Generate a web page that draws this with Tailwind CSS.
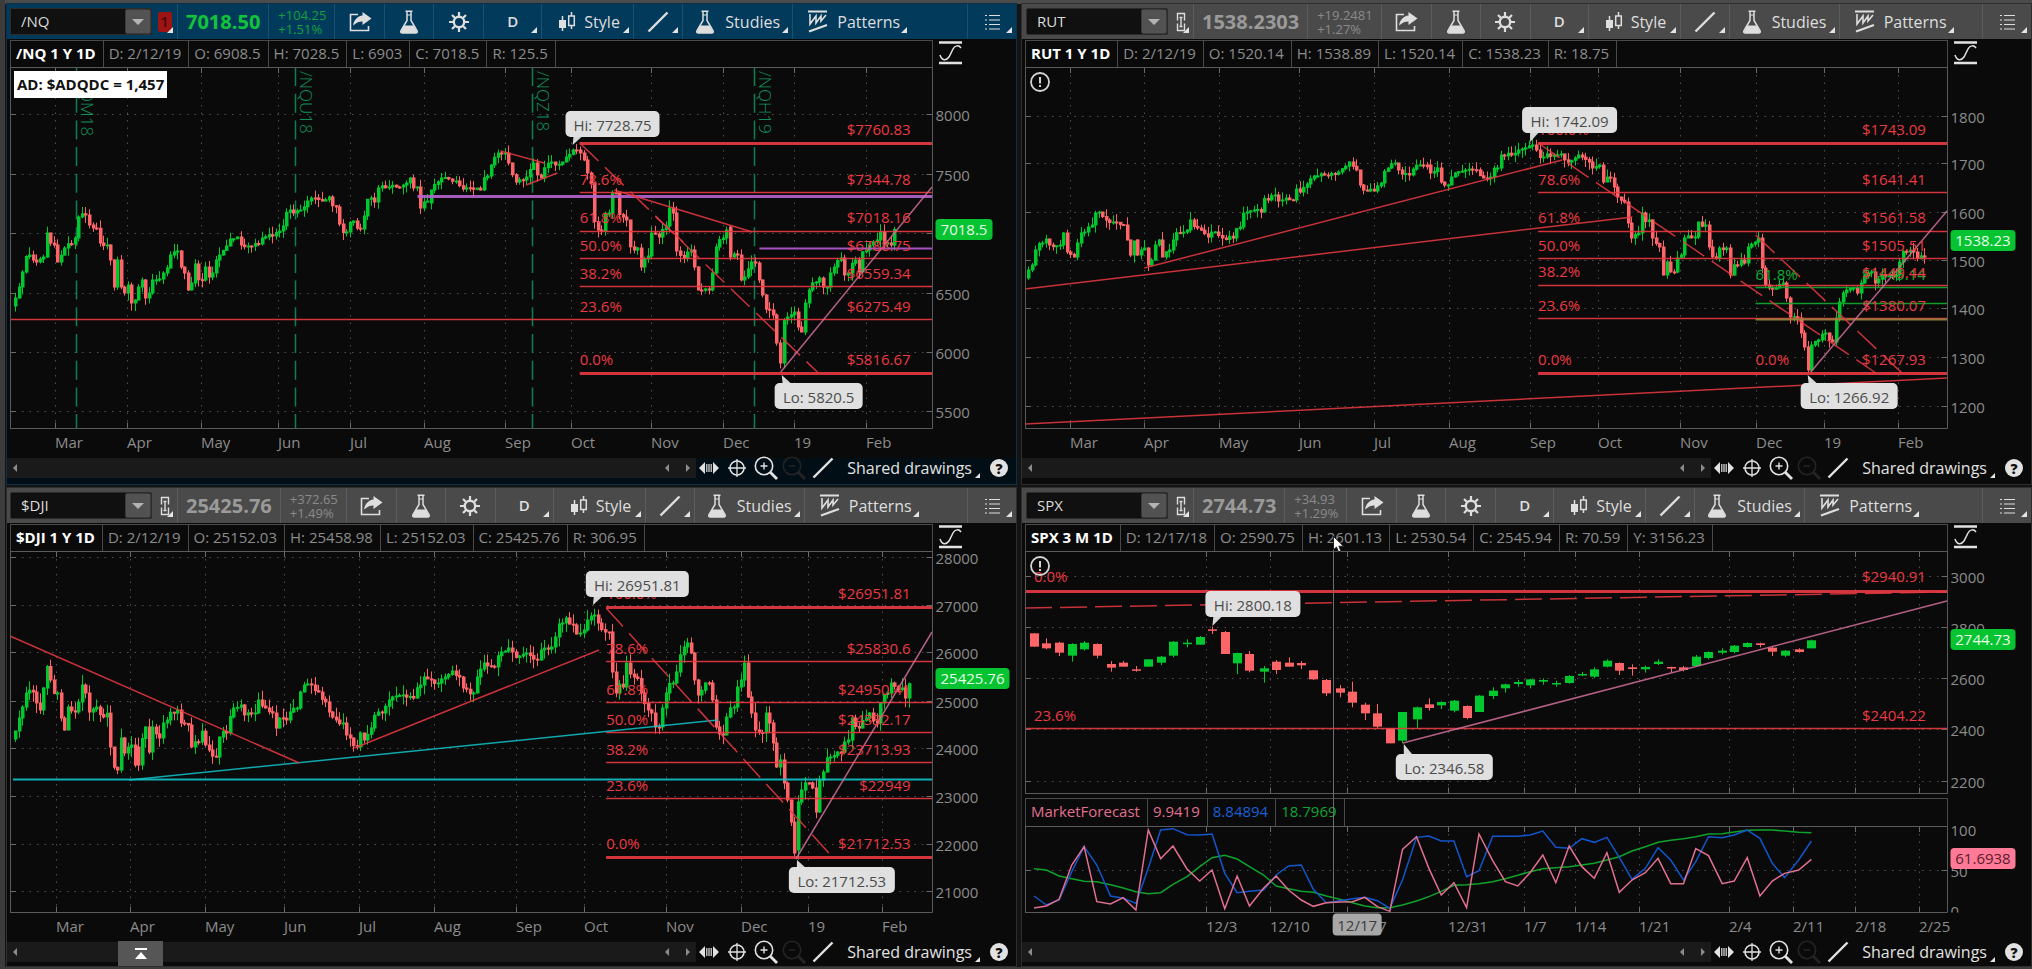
<!DOCTYPE html>
<html lang="en">
<head>
<meta charset="utf-8">
<title>Charts</title>
<script src="https://cdn.jsdelivr.net/npm/@tailwindcss/browser@4"></script>
</head>
<body class="bg-[#4b4b4b] font-['Open_Sans',sans-serif] text-[15px] text-[#8c8c8c] overflow-x-hidden">

<svg class="hidden">
  <symbol id="i-share" viewBox="0 0 24 22"><path d="M10 3.500H2.500v16h18V15" fill="none" stroke="currentColor" stroke-width="1.600"/><path d="M14.500 1l9 6.500-9 6.500v-3.600c-4 0-6.500 1.600-9.500 4.100.8-5.500 4.500-9.500 9.500-10z" fill="currentColor"/></symbol>
  <symbol id="i-flask" viewBox="0 0 20 24"><path d="M6.500 1.200h7M8 2v8.500L2 20.500c-.8 1.500 0 2.500 1.300 2.500h13.400c1.300 0 2.100-1 1.300-2.500L12 10.500V2" fill="none" stroke="currentColor" stroke-width="1.500"/><path d="M5 15.500h10l3 6q0 1.500-1.500 1.500h-13Q2 23 2 21.500z" fill="currentColor"/><path d="M8 5h4" stroke="currentColor"/></symbol>
  <symbol id="i-gear" viewBox="0 0 20 20"><circle cx="10" cy="10" r="5.200" fill="none" stroke="currentColor" stroke-width="2.400"/><path d="M10 0v5M10 15v5M0 10h5M15 10h5M3 3l3.300 3.300M13.700 13.700L17 17M17 3l-3.300 3.300M6.300 13.700L3 17" stroke="currentColor" stroke-width="2.200"/></symbol>
  <symbol id="i-candles" viewBox="0 0 18 20"><path d="M4.500 4v15M13.500 0v4M13.500 13v4" stroke="currentColor" stroke-width="1.500"/><path d="M1 8h7v8H1z" fill="currentColor"/><path d="M10.700 4h5.600v9.500h-5.600z" fill="none" stroke="currentColor" stroke-width="1.500"/></symbol>
  <symbol id="i-line" viewBox="0 0 22 22"><path d="M1.500 20.500L20.500 1.500" stroke="currentColor" stroke-width="2.400"/></symbol>
  <symbol id="i-pattern" viewBox="0 0 22 23"><path d="M1 1.500h19" stroke="currentColor" stroke-width="2"/><path d="M2 21.500L20 15" stroke="currentColor" stroke-width="2.200"/><path d="M3 4v10l6-8v7l5-7v5l5-6" fill="none" stroke="currentColor" stroke-width="1.600"/></symbol>
  <symbol id="i-list" viewBox="0 0 15 16"><path d="M0 1.500h2M0 6h2M0 10.500h2M0 15h2M4 1.500h11M4 6h11M4 10.500h11M4 15h11" stroke="currentColor" stroke-width="1.200"/></symbol>
  <symbol id="i-link" viewBox="0 0 10 20"><path d="M1.500 8.500V1.500h7v7M1.500 11.500v7h7v-7" fill="none" stroke="currentColor" stroke-width="1.400"/><path d="M3.500 5.500h3M5 5.500v9M3.500 14.500h3" stroke="currentColor" stroke-width="1.400"/></symbol>
  <symbol id="i-wave" viewBox="0 0 23 24"><path d="M0 1.500h23M0 22h23" stroke="currentColor" stroke-width="2.600"/><path d="M1 14c2 6 6 6 9 2l4-8c2-4 6-4 8-1" fill="none" stroke="currentColor" stroke-width="1.500"/></symbol>
  <symbol id="i-expand" viewBox="0 0 20 12"><path d="M6 0v12L0 6zM14 0v12l6-6z" fill="currentColor"/><path d="M7.800 2v8M10 2v8M12.200 2v8" stroke="currentColor" stroke-width="1.200"/></symbol>
  <symbol id="i-cross" viewBox="0 0 18 18"><circle cx="9" cy="9" r="7" fill="none" stroke="currentColor" stroke-width="1.600"/><path d="M9 0v18M0 9h18" stroke="currentColor" stroke-width="1.300"/></symbol>
  <symbol id="i-zin" viewBox="0 0 24 24"><circle cx="10" cy="10" r="8.700" fill="none" stroke="currentColor" stroke-width="1.600"/><path d="M10 6.500v7M6.500 10h7" stroke="currentColor" stroke-width="1.400"/><path d="M16 16l7 7" stroke="currentColor" stroke-width="2.800"/></symbol>
  <symbol id="i-zout" viewBox="0 0 24 24"><circle cx="10" cy="10" r="8.700" fill="none" stroke="currentColor" stroke-width="1.600"/><path d="M6.500 10h7" stroke="currentColor" stroke-width="1.400"/><path d="M16 16l7 7" stroke="currentColor" stroke-width="2.800"/></symbol>
</svg>

<main id="desk" class="relative grid min-h-screen grid-cols-2 grid-rows-[480fr_478fr] gap-x-1.5 gap-y-1 border-l-[5px] border-[#3c3c3c] bg-[#141414] pt-1 pr-px pb-[3px] pl-0.5">
  <div class="absolute inset-x-0 top-0 h-1 bg-[#4b4b4b]"></div>
  <div class="absolute inset-x-0 bottom-0 h-0.5 bg-[#3c3c3c]"></div>
</main>

<script>
const RED = '#ea3a42', UP = '#00c82e', DOWN = '#ff6468', PINK = '#d06f9a', CYAN = '#12c4ca', GREEN = '#12ab32';
const MONTHS = ['Mar', 'Apr', 'May', 'Jun', 'Jul', 'Aug', 'Sep', 'Oct', 'Nov', 'Dec', '19', 'Feb'];

const nq = [15,300,17,287,22,272,26,255,30,260,35,262,40,257,46,233,52,245,57,262,63,248,70,244,73,238,78,217,82,215,86,225,90,228,96,229,98,243,105,245,108,260,112,287,115,260,118,287,123,293,126,285,129,303,133,300,136,287,140,280,143,298,148,293,151,280,157,279,160,273,165,268,169,255,174,251,177,267,183,273,186,290,189,283,192,264,199,280,202,267,207,277,211,273,214,260,219,255,224,246,229,239,235,237,238,245,247,246,255,244,260,238,270,236,278,231,280,226,287,210,293,213,300,210,307,201,313,198,321,201,326,197,333,207,336,224,343,232,350,221,358,229,362,216,367,198,373,202,377,188,385,187,395,187,403,183,407,178,413,187,418,208,422,202,427,203,430,190,440,178,453,181,461,189,467,188,477,190,485,176,490,165,497,153,502,153,507,163,513,182,520,180,525,177,532,163,538,178,547,162,552,165,560,162,563,157,572,150,575,153,580,160,583,173,588,183,593,230,597,231,603,213,607,193,612,193,617,217,623,220,628,250,633,248,638,267,643,256,647,233,655,237,660,226,663,208,668,213,672,251,680,258,685,250,690,267,693,290,702,290,705,273,710,247,718,238,721,230,725,227,726,257,732,255,734,280,738,277,747,262,750,263,752,280,757,295,762,310,767,315,769,343,773,363,776,320,782,317,787,312,792,327,796,332,798,303,802,290,808,282,813,278,818,287,822,273,828,267,832,258,837,275,842,273,847,260,852,272,857,250,862,245,867,240,872,232,877,243,883,245,888,230];
const rut = [1029,272,1032,265,1036,250,1040,243,1045,239,1048,245,1058,245,1062,233,1067,252,1073,257,1078,243,1083,232,1090,225,1095,213,1099,212,1105,220,1113,222,1123,225,1126,240,1129,255,1135,240,1137,255,1143,248,1146,265,1152,260,1153,245,1158,240,1162,257,1168,250,1172,240,1178,233,1185,230,1190,220,1197,228,1207,237,1213,232,1220,238,1230,238,1237,227,1245,212,1253,210,1260,212,1265,200,1273,195,1280,200,1290,200,1293,189,1300,192,1307,184,1313,176,1323,175,1338,172,1348,162,1355,170,1358,185,1366,191,1373,191,1380,183,1385,168,1392,163,1397,170,1408,175,1418,165,1427,165,1430,173,1437,168,1440,182,1445,185,1453,173,1463,170,1475,170,1480,178,1488,177,1495,168,1500,155,1508,155,1517,150,1530,145,1535,150,1540,157,1550,155,1560,154,1565,162,1573,158,1578,155,1587,162,1592,168,1598,165,1602,182,1607,178,1612,187,1615,197,1623,202,1626,223,1630,238,1637,233,1639,213,1645,220,1649,238,1657,247,1662,275,1665,262,1670,272,1675,258,1680,255,1682,238,1692,237,1697,222,1702,225,1707,247,1713,258,1718,248,1723,248,1728,275,1733,265,1740,260,1743,263,1747,247,1757,238,1759,268,1763,285,1772,288,1780,283,1783,298,1788,317,1793,318,1797,333,1802,347,1805,370,1809,345,1817,340,1823,333,1829,342,1833,318,1837,302,1843,290,1850,288,1855,293,1858,283,1865,273,1870,272,1873,283,1880,275,1892,275,1897,262,1902,252,1912,252,1915,258,1920,257,1924,243];
const dji = [15,733,17,718,22,707,25,693,30,692,33,703,37,710,42,688,47,667,50,680,54,693,58,718,62,730,65,707,72,712,77,702,79,685,83,693,88,712,95,707,100,717,107,715,110,747,114,770,118,738,123,753,128,745,132,765,135,747,138,765,143,727,147,752,152,727,157,738,160,723,165,720,170,713,175,710,180,723,187,725,189,747,195,742,202,732,205,745,213,757,217,737,223,733,230,717,233,708,238,705,243,715,252,713,257,700,263,708,271,713,274,728,278,718,283,720,288,712,294,708,298,692,303,685,310,685,317,692,322,702,327,712,333,720,340,723,343,735,348,738,353,747,357,733,363,740,370,728,375,712,380,713,388,700,400,695,410,698,417,685,420,677,427,680,437,683,443,677,450,671,457,677,462,688,471,693,474,677,483,663,493,667,498,652,507,648,515,656,525,653,533,660,540,648,550,647,553,637,558,623,563,618,570,625,575,633,580,630,583,620,589,615,595,623,600,632,605,632,607,672,612,693,617,685,620,687,623,663,628,677,635,680,638,693,643,710,647,713,652,727,655,727,657,708,662,693,667,683,673,672,678,647,682,643,685,653,689,680,694,695,702,683,707,700,710,727,717,735,722,717,727,707,730,687,735,680,738,663,741,697,744,713,748,730,755,733,758,713,762,723,765,743,769,767,774,760,777,783,780,800,783,822,786,853,789,850,792,802,795,790,800,783,805,788,808,812,811,780,815,772,822,757,833,752,840,740,845,718,850,728,857,718,860,713,868,723,872,703,880,693,883,683,892,688,897,698,903,683];

/* Daily bars of the three month view: x, body top, body bottom, high, low, rising; three units to a pixel. */
const spx = [[75,460,500,460,500,0],[112,490,505,475,508,0],[150,488,518,485,528,0],[188,492,527,490,545,1],[225,488,508,483,512,1],[263,492,527,490,535,0],[304,552,563,543,575,0],[342,548,560,543,560,0],[380,568,571,558,575,0],[417,538,560,538,560,1],[454,530,548,528,555,1],[491,485,527,483,532,1],[533,488,492,478,502,1],[571,471,494,468,494,1],[608,448,452,440,462,0],[646,456,522,453,522,0],[683,519,550,518,582,1],[720,522,572,513,577,0],[762,565,575,558,608,1],[800,545,570,540,582,0],[837,548,560,532,560,0],[875,549,556,543,567,0],[911,571,598,571,600,0],[950,600,640,597,648,0],[990,625,638,615,652,0],[1028,635,668,605,682,0],[1065,674,700,668,720,0],[1103,700,740,672,747,0],[1140,744,790,744,790,0],[1178,696,782,696,790,1],[1220,682,718,680,745,1],[1257,673,684,655,692,0],[1294,666,676,664,687,1],[1332,662,692,660,697,1],[1370,678,714,676,718,0],[1407,647,696,645,696,1],[1448,632,648,622,657,1],[1486,613,625,611,638,1],[1523,606,612,600,620,1],[1560,598,616,596,625,1],[1598,600,605,595,614,1],[1637,609,612,602,620,1],[1677,588,609,585,611,1],[1715,582,586,576,588,1],[1752,568,590,562,594,1],[1790,542,560,538,562,1],[1827,549,572,547,585,0],[1865,562,567,553,587,0],[1905,561,568,557,578,1],[1943,545,552,538,555,1],[1981,561,564,560,577,0],[2019,562,570,558,574,0],[2056,530,558,525,560,1],[2094,516,534,514,538,1],[2135,512,518,505,523,1],[2171,497,516,495,520,1],[2210,489,501,487,503,1],[2248,490,495,488,502,0],[2285,503,515,500,528,0],[2322,512,527,510,531,1],[2364,508,516,505,518,0],[2402,481,505,479,505,1]];
const mfX = spx.map(b => b[0]);
const mfPink = [1284,1278,1258,1155,1100,1265,1272,1253,1290,1050,1136,1098,1167,1203,1170,1286,1188,1278,1225,1188,1230,1260,1279,1268,1266,1265,1252,1280,1294,1108,1070,1165,1245,1208,1283,1062,1142,1205,1218,1178,1125,1208,1098,1160,1195,1118,1237,1200,1178,1135,1211,1211,1106,1127,1211,1203,1133,1248,1203,1180,1170,1138];
const mfBlue = [1248,1275,1260,1175,1100,1155,1248,1255,1270,1165,1050,1046,1064,1065,1062,1180,1238,1234,1230,1185,1158,1155,1228,1268,1262,1256,1252,1262,1285,1200,1072,1068,1083,1083,1190,1172,1069,1069,1069,1065,1053,1102,1105,1076,1087,1072,1132,1198,1165,1103,1140,1200,1145,1070,1073,1065,1050,1075,1150,1193,1140,1083];
const mfGreen = [1166,1170,1188,1196,1204,1205,1214,1224,1235,1241,1238,1213,1190,1160,1133,1126,1137,1160,1185,1218,1226,1234,1237,1248,1258,1268,1278,1283,1283,1275,1263,1250,1234,1216,1214,1211,1205,1196,1186,1175,1166,1163,1160,1155,1150,1140,1130,1113,1100,1087,1081,1076,1070,1062,1061,1056,1051,1050,1050,1053,1057,1058];

const charts = [
 { sym: '/NQ', active: true, price: '7018.50', chg: ['+104.25', '+1.51%'],
   cells: ['/NQ 1 Y 1D', 'D: 2/12/19', 'O: 6908.5', 'H: 7028.5', 'L: 6903', 'C: 7018.5', 'R: 125.5'],
   ox: 10, right: 925, late: 1.014, oy: 67, bottom: 428, h: 391, bars: nq, seed: 5,
   vx: [55,127,201,278,350,424,504,569,648,719,789,860], vt: MONTHS,
   hy: [114,174,233,293,352,411], ht: ['8000','7500','','6500','6000','5500'],
   expiry: [[76,'/NQM18'],[295,'/NQU18'],[531,'/NQZ18'],[750,'/NQH19']],
   lines: [[578,143,925,143,RED,3],[578,192,925,192,RED,1.5],[578,231,925,231,RED,1.5],[578,258,925,258,RED,1.5],[578,286,925,286,RED,1.5],[10,319,925,319,RED,1.5],[578,373,925,373,RED,3],
     [417,196,925,196,'#b565d0',3],[755,248,925,248,'#b65ad8',2],[612,190,748,232,RED,1],[500,151,543,163,RED,1],[525,185,556,173,RED,1],[653,217,680,242,RED,1],[578,143,813,373,RED,1,'26 9'],[776,372,925,187,PINK,1]],
   texts: [[578,180,'78.6%'],[578,218,'61.8%'],[578,246,'50.0%'],[578,274,'38.2%'],[578,307,'23.6%'],[578,360,'0.0%']],
   ends: [[130,'$7760.83'],[180,'$7344.78'],[218,'$7018.16'],[246,'$6788.75'],[274,'$6559.34'],[307,'$6275.49'],[360,'$5816.67']], endX: 904,
   tips: [[564,111,94,'Hi: 7728.75',571,145],[770,383,88,'Lo: 5820.5',777,375]],
   badge: [219,57,'7018.5'], note: 'AD: $ADQDC = 1,457' },
 { sym: 'RUT', price: '1538.2303', chg: ['+19.2481', '+1.27%'],
   cells: ['RUT 1 Y 1D', 'D: 2/12/19', 'O: 1520.14', 'H: 1538.89', 'L: 1520.14', 'C: 1538.23', 'R: 18.75'],
   ox: 1026, right: 1946, oy: 67, bottom: 428, h: 391, bars: rut, seed: 11, alert: [1041,82],
   vx: [1071,1145,1220,1299,1374,1449,1530,1598,1680,1755,1823,1897], vt: MONTHS,
   hy: [116,163,212,260,308,357,406], ht: ['1800','1700','1600','1500','1400','1300','1200'],
   lines: [[1538,143,1946,143,RED,3],[1538,192,1946,192,RED,1.5],[1538,231,1946,231,RED,1.5],[1538,258,1946,258,RED,1.5],[1538,285,1946,285,RED,1.5],[1538,318,1946,318,RED,1.5],[1538,373,1946,373,RED,3],
     [1755,287,1946,287,GREEN,1.5],[1755,303,1946,303,GREEN,1.5],[1755,319,1946,319,'#98883c',2],
     [1145,268,1562,160,RED,1],[1026,289,1632,217,RED,1],[1026,424,1946,378,RED,1],[1538,143,1875,373,RED,1,'26 9'],[1755,235,1901,373,RED,1,'26 9'],[1810,372,1946,211,PINK,1]],
   texts: [[1538,130,'100.0%'],[1538,180,'78.6%'],[1538,218,'61.8%'],[1538,246,'50.0%'],[1538,272,'38.2%'],[1538,306,'23.6%'],[1538,360,'0.0%'],[1755,360,'0.0%'],[1755,275,'61.8%',GREEN],[1861,275,'$1445.14',GREEN]],
   ends: [[130,'$1743.09'],[180,'$1641.41'],[218,'$1561.58'],[246,'$1505.51'],[273,'$1449.44'],[306,'$1380.07'],[360,'$1267.93']], endX: 1925,
   tips: [[1522,107,95,'Hi: 1742.09',1530,142],[1800,383,97,'Lo: 1266.92',1807,375]],
   badge: [230,65,'1538.23'] },
 { sym: '$DJI', price: '25425.76', chg: ['+372.65', '+1.49%'],
   cells: ['$DJI 1 Y 1D', 'D: 2/12/19', 'O: 25152.03', 'H: 25458.98', 'L: 25152.03', 'C: 25425.76', 'R: 306.95'],
   ox: 10, right: 925, late: 1.014, oy: 551, bottom: 912, h: 391, bars: dji, seed: 23, wick: 10,
   vx: [56,130,205,284,359,434,515,582,663,737,803,876], vt: MONTHS,
   hy: [557,605,652,701,748,796,844,891], ht: ['28000','27000','26000','25000','24000','23000','22000','21000'],
   lines: [[604,607,925,607,RED,3],[604,661,925,661,RED,1.5],[604,702,925,702,RED,1.5],[604,732,925,732,RED,1.5],[604,762,925,762,RED,1.5],[604,798,925,798,RED,1.5],[604,857,925,857,RED,3],
     [13,779,925,779,CYAN,2],[129,780,714,720,CYAN,1],[10,636,299,763,RED,1],[354,748,597,650,RED,1],[604,608,827,857,RED,1,'25 9'],[791,859,925,632,PINK,1]],
   texts: [[604,594,'100.0%'],[604,649,'78.6%'],[604,690,'61.8%'],[604,720,'50.0%'],[604,750,'38.2%'],[604,786,'23.6%'],[604,844,'0.0%']],
   ends: [[594,'$26951.81'],[649,'$25830.6'],[690,'$24950.41'],[720,'$24332.17'],[750,'$23713.93'],[786,'$22949'],[844,'$21712.53']], endX: 904,
   tips: [[584,571,103,'Hi: 26951.81',591,605],[784,867,106,'Lo: 21712.53',792,860]],
   badge: [668,74,'25425.76'] },
 { sym: 'SPX', price: '2744.73', chg: ['+34.93', '+1.29%'],
   cells: ['SPX 3 M 1D', 'D: 12/17/18', 'O: 2590.75', 'H: 2601.13', 'L: 2530.54', 'C: 2545.94', 'R: 70.59', 'Y: 3156.23'],
   ox: 1026, right: 1946, oy: 551, bottom: 793, h: 247, wide: spx, alert: [1041,566],
   vx: [1207,1270,1347,1448,1524,1575,1639,1728,1792,1854,1918], vt: [],
   hy: [576,627,678,729,781], ht: ['3000','2800','2600','2400','2200'],
   lines: [[1026,591,1946,591,RED,3],[1026,728,1946,728,RED,1.5],[1026,608,1946,592,RED,1,'27 8'],[1403,743,1946,601,PINK,1]],
   texts: [[1035,577,'0.0%'],[1035,716,'23.6%']],
   ends: [[577,'$2940.91'],[716,'$2404.22']], endX: 1925,
   tips: [[1206,591,95,'Hi: 2800.18',1213,626],[1396,754,97,'Lo: 2346.58',1404,744]],
   badge: [629,65,'2744.73'],
   study: { ox: 1026, right: 1946, oy: 826, bottom: 912, h: 116,
     vx: [1207,1270,1347,1448,1524,1575,1639,1728,1792,1854,1918], vt: ['12/3','12/10','12/17','12/31','1/7','1/14','1/21','2/4','2/11','2/18','2/25'],
     hy: [829,870,910], ht: ['100','50','0'], plain: [829,910], cutAxis: true,
     series: [[mfGreen,'#0fa32b'],[mfBlue,'#1256cc'],[mfPink,'#e2708f']],
     badge: [848,65,'61.6938','#ff7a96','#5a1a2c'], xbadge: [1333,49,'12/17'] } }
];
const AXIS = 84;

const icon = (id, size) => `<svg class="${size} shrink-0" aria-hidden="true"><use href="#${id}"/></svg>`;
const corner = '<span class="absolute right-1 bottom-1.5 size-0 border-b-[6px] border-l-[6px] border-b-[#e4e4e4] border-l-transparent"></span>';

function toolbar(c, i) {
  const tone = c.active ? 'bg-[#023a5c] border-[#1d5070]' : 'bg-[#4a4a4a] border-[#5c5c5c]';
  const b = 'relative flex shrink-0 items-center border-l border-inherit';
  const link = c.active
    ? '<span class="flex h-5 w-3.5 items-center justify-center rounded-xs bg-[#9c1414] text-[15px] font-semibold text-[#4a0606]">1</span>'
    : icon('i-link', 'h-5 w-2.5 text-[#dedede]');
  return `<div class="flex h-[35px] items-stretch ${tone} ${i % 2 ? 'pl-1' : 'pl-[3px]'} text-[#dedede]">
    <div class="my-1 flex h-[27px] w-[142px] shrink-0 items-stretch rounded-xs border border-[#2c2c2c] bg-[#101010]">
      <input aria-label="Symbol" value="${c.sym}" class="w-0 flex-1 bg-transparent pl-2.5 text-[15px] text-[#dcdcdc] outline-none">
      <button aria-label="Choose symbol" class="flex w-[26px] items-center justify-center rounded-xs border border-[#3a3a3a] bg-[#525252]"><span class="border-x-[6px] border-t-[6px] border-x-transparent border-t-[#b4b4b4]"></span></button>
    </div>
    <button aria-label="Link colour" class="relative flex w-[25px] shrink-0 items-center justify-center">${link}${corner}</button>
    <div class="${b} px-2 text-[20px] font-bold ${c.active ? 'text-[#12c43a]' : 'text-[#9a9a9a]'}">${c.price}</div>
    <div class="${b} flex-col justify-center pr-2 pl-[9px] text-[13px] leading-[14px] ${c.active ? 'text-[#14a040]' : 'text-[#8a8a8a]'}"><span class="w-full">${c.chg[0]}</span><span class="w-full">${c.chg[1]}</span></div>
    <button aria-label="Share" class="${b} w-[50px] justify-center">${icon('i-share', 'h-[22px] w-6')}</button>
    <button aria-label="Edit studies" class="${b} w-[49px] justify-center">${icon('i-flask', 'h-6 w-5')}</button>
    <button aria-label="Settings" class="${b} w-[50px] justify-center">${icon('i-gear', 'size-5')}</button>
    <button class="${b} w-[58px] justify-center text-[15px] font-semibold">D${corner}</button>
    <button class="${b} w-[92px] gap-2 pl-4 text-[16px]">${icon('i-candles', 'h-5 w-[18px]')}Style${corner}</button>
    <button aria-label="Drawing tool" class="${b} w-[49px] justify-center">${icon('i-line', 'size-[22px]')}${corner}</button>
    <button class="${b} w-[110px] gap-2.5 pl-3 text-[16px]">${icon('i-flask', 'h-6 w-5')}Studies${corner}</button>
    <button class="${b} w-[119px] gap-2 pl-3.5 text-[16px]">${icon('i-pattern', 'h-[23px] w-[22px]')}Patterns${corner}</button>
    <span class="flex-1"></span>
    <button aria-label="Menu" class="${b} w-[49px] justify-center">${icon('i-list', 'h-4 w-[15px]')}${corner}</button>
  </div>`;
}

function footer() {
  return `<div class="flex h-5 items-stretch text-[#e2e2e2]">
    <div class="flex flex-1 items-center bg-[#1a1a1a] px-1.5">
      <button aria-label="Scroll back" class="border-y-4 border-r-4 border-y-transparent border-r-[#8c8c8c]"></button>
      <span class="flex-1"></span>
      <button aria-label="Previous" class="mr-[17px] border-y-4 border-r-4 border-y-transparent border-r-[#8c8c8c]"></button>
      <button aria-label="Next" class="border-y-4 border-l-4 border-y-transparent border-l-[#8c8c8c]"></button>
    </div>
    <div class="flex w-80 shrink-0 items-center pr-2 pl-[3px]">
      <button aria-label="Expand" class="mr-[9px]">${icon('i-expand', 'h-3 w-5')}</button>
      <button aria-label="Crosshair" class="mr-2">${icon('i-cross', 'size-[18px]')}</button>
      <button aria-label="Zoom in" class="mr-1">${icon('i-zin', 'size-6')}</button>
      <button aria-label="Zoom out" disabled class="mr-1.5 text-[#242424]">${icon('i-zout', 'size-6')}</button>
      <button aria-label="Draw line">${icon('i-line', 'size-[22px]')}</button>
      <span class="flex-1"></span>
      <button class="relative mr-2.5 pr-2 text-[16px] whitespace-nowrap">Shared drawings<span class="absolute right-0 bottom-0.5 size-0 border-b-[5px] border-l-[5px] border-b-[#e4e4e4] border-l-transparent"></span></button>
      <button aria-label="Help" class="flex size-[18px] items-center justify-center rounded-full bg-[#e2e2e2] text-[14px] font-extrabold text-[#101010]">?</button>
    </div>
  </div>`;
}

function cells(list, tones) {
  return list.map((t, k) => `<span class="flex items-center border-r border-[#4a4a4a] pr-[7px] pb-0.5 pl-[5px] whitespace-nowrap ${tones ? tones[k] : k ? '' : 'font-bold text-white'}">${t}</span>`).join('');
}

const desk = document.getElementById('desk');
const plots = [];
charts.forEach((c, i) => {
  const sec = document.createElement('section');
  sec.className = 'relative flex min-w-0 flex-col ' + (c.active ? 'bg-[#020e16] outline outline-[#0c3048]' : 'bg-[#0a0a0a] outline outline-[#2e2e2e]') + (i > 1 ? ' pb-1' : ' pb-1.5');
  sec.innerHTML = toolbar(c, i) + `
    <div class="flex flex-1 flex-col bg-[#0a0a0a] pt-px ${i % 2 ? 'pl-[3px]' : 'pl-[3px]'}">
      <div class="flex h-[27px] items-stretch">
        <div class="flex min-w-0 flex-1 overflow-hidden border-x border-t border-[#4a4a4a]">${cells(c.cells)}</div>
        <button aria-label="Scale" class="flex w-[83px] shrink-0 pt-px pl-1.5 text-[#e2e2e2]">${icon('i-wave', 'h-6 w-[23px]')}</button>
      </div>
      <div class="relative min-h-[247px] flex-1"><svg data-plot class="absolute inset-0 size-full overflow-visible"></svg></div>
      ${c.study ? `<div class="flex h-7 items-stretch"><div class="flex flex-1 border-x border-t border-[#4a4a4a]">${cells(['MarketForecast', '9.9419', '8.84894', '18.7969'], ['text-[#e2708f]', 'text-[#e2708f]', 'text-[#1a5fd8]', 'text-[#12a332]'])}</div><span class="w-[83px]"></span></div>
      <div class="relative h-[116px]"><svg data-plot class="absolute inset-0 size-full"></svg></div>` : ''}
    </div>` + footer();
  if (c.note) sec.insertAdjacentHTML('beforeend', `<div class="absolute top-[67px] left-[7px] h-[27px] bg-white px-[3px] text-[15px] leading-[27px] font-bold text-[#111]">${c.note}</div>`);
  if (i === 2) sec.insertAdjacentHTML('beforeend', '<button aria-label="Expand panel" class="absolute bottom-0 left-[111px] flex h-[25px] w-[45px] flex-col items-center justify-center gap-0.5 bg-[#565656]"><span class="h-0.5 w-3 bg-white"></span><span class="border-x-[6px] border-b-[7px] border-x-transparent border-b-white"></span></button>');
  if (c.study) sec.insertAdjacentHTML('beforeend', `<div class="absolute top-[54px] bottom-[54px] left-[30.8%] w-px bg-[#6e6e6e]"></div>
    <svg class="absolute top-[48px] left-[30.8%] h-[17px] w-3" viewBox="0 0 12 17" aria-hidden="true"><path d="M.5.5v13.200l3-2.700 2 5 2.400-1-2-4.800h4.600z" fill="#fff" stroke="#222"/></svg>`);
  desk.appendChild(sec);
  const svgs = sec.querySelectorAll('[data-plot]');
  plots.push([svgs[0], c]);
  if (c.study) plots.push([svgs[1], c.study]);
});

function draw(svg, c) {
  const W = svg.clientWidth, H = svg.clientHeight, plotW = W - AXIS;
  const below = c.oy + c.h - c.bottom;
  /* The left hand charts space their sessions a little wider past x = 500. */
  const late = x => c.late && x > 500 ? 500 + (x - 500) * c.late : x;
  const X = x => (late(x) - c.ox) * plotW / (late(c.right) - c.ox);
  const Y = y => (y - c.oy) * (H - below) / (c.bottom - c.oy);
  const R = Math.round(plotW) + 0.5, B = Math.round(Y(c.bottom)) + 0.5;
  const px = v => Math.round(v) + 0.5;
  let o = '';
  const line = (x1, y1, x2, y2, s, w = 1, d = '', more = '') => { o += `<line x1="${x1}" y1="${y1}" x2="${x2}" y2="${y2}" stroke="${s}" stroke-width="${w}"${d ? ` stroke-dasharray="${d}"` : ''}${more}/>`; };
  const text = (x, y, t, f, a = 'start', size = 15, extra = '') => { o += `<text x="${x}" y="${y}" fill="${f}" text-anchor="${a}" font-size="${size}" ${extra}>${t}</text>`; };

  c.vx.forEach((x, k) => {
    const v = px(X(x));
    line(v, 8, v, B, '#505050', 1, '1.500 6');
    line(v, 0, v, 6, '#6a6a6a'); line(v, B - 6, v, B, '#6a6a6a');
    if (c.vt[k]) text(v - 0.5, B + 19, c.vt[k], '#8c8c8c');
  });
  c.hy.forEach((y, k) => {
    const v = px(Y(y));
    if (!(c.plain || []).includes(y)) { line(12, v, R, v, '#505050', 1, '1.500 6'); line(0, v, 6, v, '#6a6a6a'); line(R - 6, v, R, v, '#6a6a6a'); }
    if (c.ht[k]) text(R + 3, v + 6, c.ht[k], '#8c8c8c');
  });
  if (c.cutAxis) o += `<rect x="${R + 1}" y="${B}" width="${AXIS - 2}" height="8" fill="#0a0a0a"/>`;
  (c.expiry || []).forEach(([x, t]) => {
    const v = px(X(x));
    line(v, 0, v, B, '#0d8052', 1.5, '19 7.700');
    text(0, 0, t, '#12915a', 'start', 17, `font-weight="300" transform="translate(${v + 4} 4) rotate(90)"`);
  });

  if (c.bars) {
    const p = c.bars; let s = c.seed, prev = p[1] + 6, k = 0;
    const rnd = () => (s = (s * 16807 + 7) % 2147483647) / 2147483647;
    for (let x = p[0]; x <= p[p.length - 2]; x += 3.52) {
      let close = null, top = prev, bot = prev;
      while (k < p.length - 4 && p[k + 2] <= x) { k += 2; close = p[k + 1]; top = Math.min(top, close); bot = Math.max(bot, close); }
      if (close === null) close = p[k + 1] + (p[k + 3] - p[k + 1]) * Math.min(1, (x - p[k]) / (p[k + 2] - p[k])) + (rnd() - 0.5) * 4;
      top = Math.min(top, close); bot = Math.max(bot, close);
      const w = c.wick || 8, col = close < prev ? UP : DOWN, cx = px(X(x));
      line(cx, Y(top - rnd() * w), cx, Y(bot + rnd() * w), col, 1);
      o += `<rect x="${cx - 1.5}" y="${Y(top) - 0.5}" width="3.5" height="${Math.max(2, Y(bot) - Y(top) + 1)}" fill="${col}"/>`;
      prev = close;
    }
  }
  (c.wide || []).forEach(([x, a, b, hi, lo, up]) => {
    const cx = px(X(1010 + x / 3)), y = v => Y(480 + v / 3), col = up ? UP : DOWN;
    line(cx, y(hi), cx, y(lo), col, 1);
    o += `<rect x="${cx - 4.5}" y="${y(a)}" width="9" height="${Math.max(1.5, y(b) - y(a))}" fill="${col}"/>`;
  });
  (c.series || []).forEach(([v, col]) => {
    o += `<polyline fill="none" stroke="${col}" stroke-width="1.500" points="${v.map((y, k) => X(1010 + mfX[k] / 3) + ',' + Y(480 + y / 3)).join(' ')}"/>`;
  });
  (c.lines || []).forEach(([x1, y1, x2, y2, col, w, d]) => {
    const flat = y1 === y2;
    line(X(x1), flat ? px(Y(y1)) : Y(y1), X(x2), flat ? px(Y(y2)) : Y(y2), col, flat ? w : 1.5, d, flat ? ' opacity=".9"' : ' opacity=".85"');
  });
  (c.texts || []).forEach(([x, y, t, col]) => text(X(x), Y(y) + 5, t, col || RED));
  (c.ends || []).forEach(([y, t]) => text(X(c.endX), Y(y) + 5, t, RED, 'end'));
  if (c.alert) {
    const x = X(c.alert[0]), y = Y(c.alert[1]);
    o += `<circle cx="${x}" cy="${y}" r="9" fill="none" stroke="#d4d4d4" stroke-width="1.800"/><path d="M${x} ${y - 5}v6.500M${x} ${y + 3}v2" stroke="#d4d4d4" stroke-width="2"/>`;
  }
  line(0.5, 0, 0.5, B, '#5a5a5a'); line(R, 0, R, B, '#5a5a5a'); line(0, 0.5, R, 0.5, '#5a5a5a'); line(0, B, R, B, '#5a5a5a');
  (c.tips || []).forEach(([x, y, w, t, tx, ty]) => {
    const l = X(x), top = Y(y), e = ty > y + 13 ? top + 25 : top + 1;
    o += `<path d="M${l + 8} ${e}h9L${X(tx)} ${Y(ty)}z" fill="#d8d8d8"/><rect x="${l}" y="${top}" width="${w}" height="26" rx="5" fill="#e0e0e0"/>`;
    text(l + w / 2, top + 20, t, '#4c4c4c', 'middle');
  });
  if (c.badge) {
    const [y, w, t, bg = '#06c332', fg = '#e8ffe8'] = c.badge, top = Y(y);
    o += `<rect x="${R + 3}" y="${top}" width="${w}" height="21" rx="4" fill="${bg}"/>`;
    text(R + 3 + w / 2, top + 16, t, fg, 'middle');
  }
  if (c.xbadge) {
    const [x, w, t] = c.xbadge;
    o += `<rect x="${X(x)}" y="${B + 1}" width="${w}" height="22" rx="4" fill="#a8a8a8"/>`;
    text(X(x) + w / 2, B + 18, t, '#3c3c3c', 'middle');
  }
  svg.innerHTML = o;
}
const render = () => plots.forEach(([s, c]) => draw(s, c));
render();
addEventListener('load', render);
addEventListener('resize', render);
</script>
</body>
</html>
